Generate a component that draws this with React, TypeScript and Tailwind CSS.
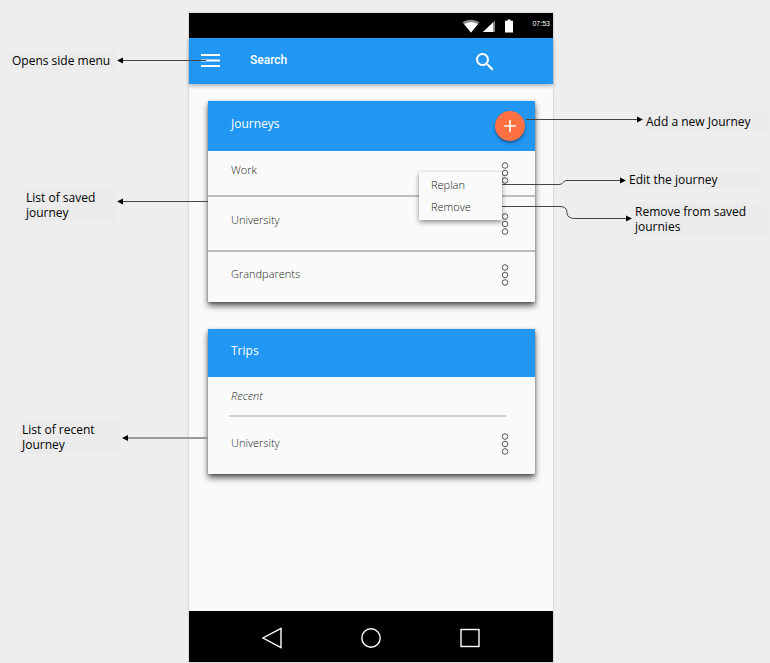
import { MdAdd, MdSearch } from "react-icons/md";

type NoteProps = { text: string; className: string };

function Note({ text, className }: NoteProps) {
  return (
    <p className={`bg-[#ebebeb] px-[3px] py-0.5 text-xs leading-[15px] text-black ${className}`}>
      {text}
    </p>
  );
}

function MoreButton({ label }: { label: string }) {
  return (
    <button type="button" aria-label={label} className="shrink-0">
      <svg width="8" height="24" viewBox="0 0 8 24" fill="none" stroke="#555" strokeWidth="1">
        <circle cx="4" cy="4.5" r="2.8" />
        <circle cx="4" cy="12" r="2.8" />
        <circle cx="4" cy="19.5" r="2.8" />
      </svg>
    </button>
  );
}

function StatusBar() {
  return (
    <div className="flex h-[25px] items-center justify-end bg-black pr-[3px] text-white">
      <svg width="18" height="14" viewBox="0 0 18 14" aria-hidden="true">
        <path d="M9 13.5 0.5 3.2C5 -0.2 13 -0.2 17.500 3.200Z" fill="#8a8a8a" />
        <path d="M9 13.500 2.200 5.200C6 2.600 12 2.600 15.800 5.200Z" fill="#fff" />
      </svg>
      <svg className="ml-[3px]" width="12" height="14" viewBox="0 0 12 14" aria-hidden="true">
        <path d="M12 1.500V13H0Z" fill="#8a8a8a" />
        <path d="M10 3.500V13H0Z" fill="#fff" />
      </svg>
      <svg className="ml-2.5" width="8" height="14" viewBox="0 0 8 14" aria-hidden="true">
        <path d="M2.500 0.500h3v1.200H8V13.500H0V1.700h2.500Z" fill="#fff" />
      </svg>
      <time className="ml-[19px] pb-1 font-['Liberation_Sans',sans-serif] text-[7px] leading-none">
        07:53
      </time>
    </div>
  );
}

function AppBar() {
  return (
    <header className="relative flex h-[46px] items-center gap-7 bg-[#2196f3] pl-[9px] pr-14 text-white shadow-[0_2px_4px_rgba(0,0,0,0.3)]">
      <button type="button" aria-label="Open side menu">
        <svg width="24" height="24" viewBox="0 0 24 24" fill="#fff">
          <rect x="3" y="5" width="19" height="2" />
          <rect x="3" y="10.500" width="19" height="2" />
          <rect x="3" y="16" width="19" height="2" />
        </svg>
      </button>
      <div className="flex flex-1 items-center pt-0.5">
        <input
          type="text"
          aria-label="Search"
          placeholder="Search"
          className="min-w-0 flex-1 bg-transparent pb-1 font-[Roboto,sans-serif] text-xs font-medium leading-5 text-white outline-none placeholder:text-white placeholder:opacity-100"
        />
        <button type="button" aria-label="Run search">
          <MdSearch size={24} />
        </button>
      </div>
    </header>
  );
}

const cardClass =
  "rounded-[1px] bg-[#fafafa] shadow-[0_4px_6px_rgba(0,0,0,0.6),0_1px_3px_rgba(0,0,0,0.3)]";
const rowClass = "relative flex items-center justify-between pl-[23px] pr-[26px]";

function JourneysCard() {
  return (
    <section className={cardClass}>
      <div className="flex h-[50px] items-center justify-between bg-[#2196f3] pl-[23px] pr-2.5 text-white">
        <h2 className="pb-[5px] text-xs font-medium">Journeys</h2>
        <button
          type="button"
          aria-label="Add a new journey"
          className="flex size-[30px] items-center justify-center rounded-full bg-[#ff7043] shadow-[0_2px_3px_rgba(0,0,0,0.4)]"
        >
          <MdAdd size={20} />
        </button>
      </div>
      <ul className="text-[11px] font-light text-[#222]">
        <li className={`${rowClass} h-[46px] border-b-2 border-[#bdbdbd]`}>
          <span className="pb-1.5">Work</span>
          <MoreButton label="Options for Work" />
          <div
            role="menu"
            className="absolute right-[33px] top-[21px] z-10 flex w-[83px] flex-col bg-[#fafafa] py-0.5 shadow-[0_2px_5px_rgba(0,0,0,0.45)]"
          >
            <button type="button" role="menuitem" className="px-3 text-left leading-[22px]">
              Replan
            </button>
            <button type="button" role="menuitem" className="px-3 text-left leading-[22px]">
              Remove
            </button>
          </div>
        </li>
        <li className={`${rowClass} h-[55px] border-b-2 border-[#bdbdbd]`}>
          <span className="pb-1.5">University</span>
          <MoreButton label="Options for University" />
        </li>
        <li className={`${rowClass} h-[50px] pb-1`}>
          <span className="pb-0.5">Grandparents</span>
          <MoreButton label="Options for Grandparents" />
        </li>
      </ul>
    </section>
  );
}

function TripsCard() {
  return (
    <section className={cardClass}>
      <div className="flex h-12 items-center bg-[#2196f3] pl-[23px] text-white">
        <h2 className="pb-[5px] text-xs font-medium">Trips</h2>
      </div>
      <div className="text-[11px] font-light text-[#222]">
        <h3 className="ml-[21px] mr-[29px] flex h-10 items-center border-b-2 border-[#cfcfcf] pl-0.5 italic">
          Recent
        </h3>
        <div className={`${rowClass} h-[57px] pb-1`}>
          <span>University</span>
          <MoreButton label="Options for recent trip to University" />
        </div>
      </div>
    </section>
  );
}

function NavBar() {
  return (
    <nav
      aria-label="System"
      className="flex h-[51px] items-center justify-center gap-[79px] bg-black pt-0.5"
    >
      <button type="button" aria-label="Back">
        <svg width="20" height="22" viewBox="0 0 20 22" fill="none" stroke="#fff" strokeWidth="1.400">
          <path d="M19 1.500V20.500L1 11Z" />
        </svg>
      </button>
      <button type="button" aria-label="Home">
        <svg width="20" height="20" viewBox="0 0 20 20" fill="none" stroke="#fff" strokeWidth="1.400">
          <circle cx="10" cy="10" r="9.200" />
        </svg>
      </button>
      <button type="button" aria-label="Overview">
        <svg width="20" height="20" viewBox="0 0 20 20" fill="none" stroke="#fff" strokeWidth="1.400">
          <rect x="1" y="1.500" width="18" height="17" />
        </svg>
      </button>
    </nav>
  );
}

// Lines run from the phone's controls out to the notes on both sides.
function Connectors() {
  return (
    <svg
      aria-hidden="true"
      className="pointer-events-none absolute inset-0 z-20 size-full overflow-visible"
      fill="none"
      stroke="#444"
      strokeWidth="1"
    >
      <path d="M17 47.500H-67" />
      <path d="M19 188.500H-67" />
      <path d="M19 425H-62" stroke="#999" strokeWidth="2" />
      <path d="M337 106.500H449" />
      <path d="M313 171.500H370Q373 171.500 374 169.500T378 167.500H432" />
      <path d="M313 193.500H371Q378 193.500 378 199.500T386 205.500H438" />
      <g fill="#000" stroke="none">
        <path d="M-72 47.500l6-3v6Z" />
        <path d="M-72 188.500l6-3v6Z" />
        <path d="M-67 425l6-3v6Z" />
        <path d="M454 106.500l-6-3v6Z" />
        <path d="M437 167.500l-6-3v6Z" />
        <path d="M443 205.500l-6-3v6Z" />
      </g>
    </svg>
  );
}

export default function App() {
  return (
    <main className="grid min-h-screen grid-cols-[minmax(189px,1fr)_364px_minmax(217px,1fr)] items-start bg-[#eee] pt-[13px] font-['Open_Sans','Noto_Sans',sans-serif]">
      <aside className="flex flex-col items-end">
        <Note text="Opens side menu" className="mr-[73px] mt-[38px] w-[107px]" />
        <Note text="List of saved journey" className="mr-[73px] mt-[118px] w-[93px]" />
        <Note text="List of recent Journey" className="mr-[68px] mt-[198px] w-[102px]" />
      </aside>
      <div className="relative bg-[#fafafa] shadow-[0_0_1px_1px_rgba(0,0,0,0.08)]">
        <StatusBar />
        <AppBar />
        <div className="flex min-h-[527px] flex-col gap-[27px] pl-[19px] pr-[18px] pt-[17px]">
          <JourneysCard />
          <TripsCard />
        </div>
        <NavBar />
        <Connectors />
      </div>
      <aside className="flex flex-col items-start">
        <Note text="Add a new Journey" className="ml-[90px] mt-[99px] w-[124px]" />
        <Note text="Edit the journey" className="ml-[73px] mt-[39px] w-[135px]" />
        <Note text="Remove from saved journies" className="ml-[79px] mt-[13px] w-[135px]" />
      </aside>
    </main>
  );
}
